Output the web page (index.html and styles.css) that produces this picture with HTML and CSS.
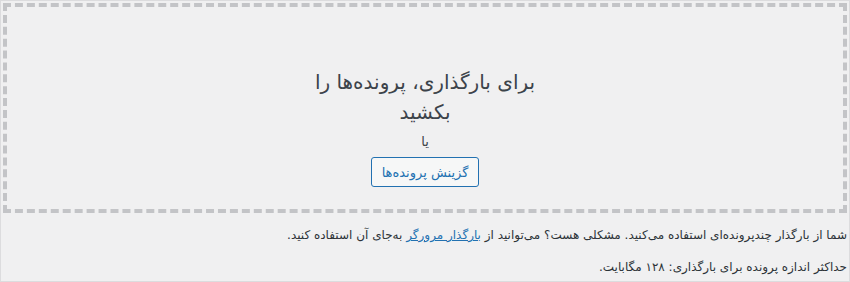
FILE: index.html
```html
<!DOCTYPE html>
<html lang="fa" dir="rtl">
<head>
    <meta charset="UTF-8">
    <title>بارگذاری پرونده</title>
    <link rel="stylesheet" href="styles.css">
</head>
<body>

    <div class="upload-ui">
        <div class="drag-drop-area">
            <div class="drag-drop-inside">
                <p class="drag-drop-info">برای بارگذاری، پرونده‌ها را بکشید</p>
                <p class="drag-drop-or">یا</p>
                <p class="drag-drop-buttons">
                    <button type="button" class="browse-button">گزینش پرونده‌ها</button>
                </p>
            </div>
        </div>

        <p class="upload-note">شما از بارگذار چندپرونده‌ای استفاده می‌کنید. مشکلی هست؟ می‌توانید از <a href="#">بارگذار مرورگر</a> به‌جای آن استفاده کنید.</p>
        <p class="upload-note">حداکثر اندازه پرونده برای بارگذاری: ۱۲۸ مگابایت.</p>
    </div>

</body>
</html>
```

FILE: styles.css
```css
* {
    box-sizing: border-box;
}

body {
    margin: 0;
    font-family: 'DejaVu Sans', sans-serif;
    background: #f0f0f1;
    color: #3c434a;
}

.upload-ui {
    height: 282px;
    padding: 2px;
    border: 1px solid #dcdcde;
    background: #f0f0f1;
    overflow: hidden;
}

.drag-drop-area {
    height: 210px;
    border: 4px dashed #c3c4c7;
}

.drag-drop-inside {
    width: 250px;
    margin: 60px auto 0;
    text-align: center;
}

.drag-drop-inside p {
    margin: 5px 0;
    font-size: 13px;
    line-height: 20px;
}

.drag-drop-inside p.drag-drop-info {
    margin-top: 0;
    font-size: 20px;
    line-height: 30px;
    color: #3c434a;
}

.browse-button {
    height: 30px;
    padding: 0 10px;
    font-family: inherit;
    font-size: 13px;
    color: #2271b1;
    background: #f6f7f7;
    border: 1px solid #2271b1;
    border-radius: 3px;
    cursor: pointer;
}

.upload-note {
    margin: 13px 0;
    font-size: 12px;
    line-height: 19px;
    color: #2c3338;
}

.upload-note a {
    color: #2271b1;
}
```
